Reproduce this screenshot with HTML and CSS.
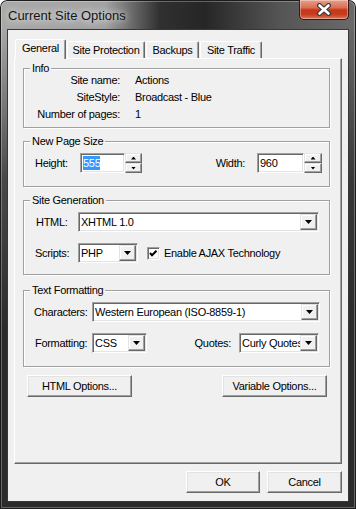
FILE: index.html
```html
<!DOCTYPE html>
<html>
<head>
<meta charset="utf-8">
<title>Current Site Options</title>
<link rel="stylesheet" href="styles.css">
</head>
<body>
<div class="window">
  <div class="titlebar">
    <span class="title">Current Site Options</span>
    <div class="close">
      <svg width="16" height="13" viewBox="0 0 16 13"><path d="M3.5 2.5 L12.5 10.5 M12.5 2.5 L3.5 10.5" stroke="#3c3c3c" stroke-width="5" stroke-linecap="round"/><path d="M3.5 2.5 L12.5 10.5 M12.5 2.5 L3.5 10.5" stroke="#fff" stroke-width="2.6" stroke-linecap="round"/></svg>
    </div>
  </div>
  <div class="client">
    <div class="tabs">
      <div class="tab active t-general">General</div>
      <div class="tab t-prot">Site Protection</div>
      <div class="tab t-back">Backups</div>
      <div class="tab t-traffic">Site Traffic</div>
    </div>
    <div class="panel">
      <div class="group info">
        <div class="group-title">Info</div>
        <div class="info-grid">
          <span class="k">Site name:</span><span>Actions</span>
          <span class="k">SiteStyle:</span><span>Broadcast - Blue</span>
          <span class="k">Number of pages:</span><span>1</span>
        </div>
      </div>

      <div class="group pagesize">
        <div class="group-title">New Page Size</div>
        <span class="lbl-height">Height:</span>
        <div class="field f-height"><span class="sel">555</span></div>
        <div class="spin"><span class="up"></span><span class="down"></span></div>
        <span class="lbl-width">Width:</span>
        <div class="field f-width">960</div>
        <div class="spin spin-w"><span class="up"></span><span class="down"></span></div>
      </div>

      <div class="group sitegen">
        <div class="group-title">Site Generation</div>
        <div class="row">
          <span class="lbl lbl-html">HTML:</span>
          <div class="select s-html"><span class="val">XHTML 1.0</span><span class="dd"></span></div>
        </div>
        <div class="row">
          <span class="lbl">Scripts:</span>
          <div class="select s-scripts"><span class="val">PHP</span><span class="dd"></span></div>
          <span class="check"><svg width="9" height="9" viewBox="0 0 9 9"><polyline points="1,4 3,6.2 7.5,1.7" fill="none" stroke="#000" stroke-width="2"/></svg></span>
          <span class="check-label">Enable AJAX Technology</span>
        </div>
      </div>

      <div class="group textfmt">
        <div class="group-title">Text Formatting</div>
        <div class="row">
          <span class="lbl2">Characters:</span>
          <div class="select s-chars"><span class="val">Western European (ISO-8859-1)</span><span class="dd"></span></div>
        </div>
        <div class="row">
          <span class="lbl2 lbl-fmt">Formatting:</span>
          <div class="select s-fmt"><span class="val">CSS</span><span class="dd"></span></div>
          <span class="lbl-quotes">Quotes:</span>
          <div class="select s-quotes"><span class="val">Curly Quotes</span><span class="dd"></span></div>
        </div>
      </div>

      <div class="option-buttons">
        <button class="btn wide">HTML Options...</button>
        <button class="btn wide">Variable Options...</button>
      </div>
    </div>
    <div class="dlg-buttons">
      <button class="btn ok">OK</button>
      <button class="btn cancel">Cancel</button>
    </div>
  </div>
</div>
</body>
</html>
```
FILE: styles.css
```css
* { box-sizing: border-box; }

body {
  margin: 0;
  font-family: "Liberation Sans", Arial, sans-serif;
  font-size: 11px;
  letter-spacing: -0.3px;
  color: #000;
  background: #fff;
}

.window {
  width: 356px;
  height: 509px;
  display: flex;
  flex-direction: column;
  border-radius: 7px 7px 0 0;
  background:
    linear-gradient(to bottom, rgba(40,40,40,0) 26px, rgba(40,40,40,0.75) 180px, #2b2b2b 330px),
    linear-gradient(to right, #a9a9a9 0, #a3a3a3 105px, #303030 160px, #262626 205px, #555 280px, #6a6a6a 356px);
  box-shadow: inset 0 0 0 1px #1c1c1c, inset 0 0 0 2px rgba(255,255,255,0.28);
  overflow: hidden;
}

.titlebar {
  height: 30px;
  flex: none;
  display: flex;
  align-items: flex-start;
  padding: 0 7px 0 8px;
}

.title {
  margin-top: 8px;
  font-size: 13px;
  line-height: 16px;
  letter-spacing: 0;
  color: #141414;
  text-shadow: 0 0 6px rgba(255,255,255,0.9), 0 0 12px rgba(255,255,255,0.6);
}

.close {
  margin-left: auto;
  width: 50px;
  height: 20px;
  border: 1px solid #3a1710;
  border-top: none;
  border-radius: 0 0 5px 5px;
  background: linear-gradient(#e6a08c 0, #da6f55 40%, #c8381a 52%, #c43c1c 75%, #de7556 100%);
  box-shadow: inset 0 0 0 1px rgba(255,255,255,0.35);
  display: flex;
  align-items: center;
  justify-content: center;
}

.client {
  flex: 1;
  margin: 0 8px 8px 8px;
  background: #f0f0f0;
  padding: 7px 6px 0;
  box-shadow: 0 0 0 1px #383838;
  display: flex;
  flex-direction: column;
}

.tabs {
  height: 21px;
  flex: none;
  display: flex;
  align-items: flex-end;
  padding-left: 1px;
}

.tab {
  height: 17px;
  margin-left: 1px;
  padding-top: 1px;
  border: 1px solid;
  border-bottom: none;
  border-color: #fff #696969 transparent #fff;
  box-shadow: inset -1px 0 0 #a0a0a0;
  border-radius: 2px 2px 0 0;
  text-align: center;
  line-height: 14px;
  background: #f0f0f0;
  white-space: nowrap;
}

.tab.active {
  height: 20px;
  margin-left: 0;
  margin-bottom: -1px;
  position: relative;
  z-index: 1;
}

.t-general { width: 51px; }
.t-prot { width: 78px; }
.t-back { width: 53px; }
.t-traffic { width: 62px; }

.panel {
  height: 406px;
  flex: none;
  border: 1px solid;
  border-color: #fff #696969 #696969 #fff;
  box-shadow: inset -1px -1px 0 #a0a0a0;
  padding: 9px 11px 0 8px;
  display: flex;
  flex-direction: column;
}

.group {
  position: relative;
  flex: none;
  border: 1px solid #a0a0a0;
  box-shadow: inset 1px 1px 0 #fff, 1px 1px 0 #fff;
}

.group-title {
  position: absolute;
  top: -7px;
  left: 6px;
  padding: 0 2px;
  background: #f0f0f0;
  line-height: 13px;
  white-space: nowrap;
}

/* Info */
.info {
  height: 60px;
  padding-top: 4px;
}

.info-grid {
  display: grid;
  grid-template-columns: 96px auto;
  column-gap: 15px;
  row-gap: 3px;
  line-height: 14px;
}

.k { text-align: right; }

/* New page size */
.pagesize {
  margin-top: 13px;
  height: 46px;
  display: flex;
  align-items: flex-start;
  padding: 11px 7px 0 11px;
}

.lbl-height { width: 45px; line-height: 20px; }
.lbl-width { margin-left: auto; margin-right: 12px; line-height: 20px; }

.field {
  height: 20px;
  border: 1px solid;
  border-color: #a0a0a0 #fff #fff #a0a0a0;
  box-shadow: inset 1px 1px 0 #696969, inset -1px -1px 0 #e3e3e3;
  background: #fff;
  padding: 2px 2px 0 2px;
  line-height: 14px;
  white-space: nowrap;
}

.f-height { width: 45px; }
.f-width { width: 47px; }

.sel {
  display: inline-block;
  background: #3399ff;
  color: #fff;
  line-height: 14px;
}

.spin {
  width: 17px;
  height: 20px;
  display: flex;
  flex-direction: column;
}

.spin-w { width: 18px; }

.spin span {
  flex: 1;
  display: flex;
  align-items: center;
  justify-content: center;
  background: #f0f0f0;
  border: 1px solid;
  border-color: #e3e3e3 #696969 #696969 #e3e3e3;
  box-shadow: inset -1px -1px 0 #a0a0a0, inset 1px 1px 0 #fff;
}

.spin span::after {
  content: "";
  width: 5px;
  height: 3px;
  background: #000;
}

.spin .up::after { clip-path: polygon(50% 0, 100% 100%, 0 100%); }
.spin .down::after { clip-path: polygon(0 0, 100% 0, 50% 100%); }

/* Selects */
.row {
  display: flex;
  align-items: center;
  height: 20px;
}

.row + .row { margin-top: 11px; }

.select {
  height: 20px;
  display: flex;
  border: 1px solid;
  border-color: #a0a0a0 #fff #fff #a0a0a0;
  box-shadow: inset 1px 1px 0 #696969, inset -1px -1px 0 #e3e3e3;
  background: #fff;
  padding: 1px;
}

.select .val {
  flex: 1;
  min-width: 0;
  overflow: hidden;
  white-space: nowrap;
  padding-left: 1px;
  line-height: 16px;
}

.dd {
  width: 17px;
  height: 16px;
  flex: none;
  display: flex;
  align-items: center;
  justify-content: center;
  background: #f0f0f0;
  border: 1px solid;
  border-color: #e3e3e3 #696969 #696969 #e3e3e3;
  box-shadow: inset -1px -1px 0 #a0a0a0, inset 1px 1px 0 #fff;
}

.dd::after {
  content: "";
  width: 7px;
  height: 4px;
  background: #000;
  clip-path: polygon(0 0, 100% 0, 50% 100%);
}

.sitegen {
  margin-top: 13px;
  height: 75px;
  padding: 11px 0 0 11px;
}

.lbl { width: 43px; }
.lbl-html { padding-left: 1px; }

.s-html { width: 241px; }
.s-scripts { width: 60px; }

.check {
  width: 13px;
  height: 13px;
  margin-left: 9px;
  border: 1px solid;
  border-color: #a0a0a0 #fff #fff #a0a0a0;
  box-shadow: inset 1px 1px 0 #696969, inset -1px -1px 0 #e3e3e3;
  background: #fff;
  display: flex;
  align-items: center;
  justify-content: center;
}

.check-label { margin-left: 4px; }

.textfmt {
  margin-top: 15px;
  height: 77px;
  padding: 11px 0 0 10px;
}

.lbl2 { width: 58px; }
.lbl-fmt { padding-left: 1px; }

.s-chars { width: 228px; }
.s-fmt { width: 55px; }
.lbl-quotes { margin-left: auto; }
.s-quotes { width: 80px; margin-left: 8px; margin-right: 10px; }

/* Buttons */
.btn {
  font: inherit;
  letter-spacing: inherit;
  color: #000;
  height: 22px;
  padding: 0;
  background: #f0f0f0;
  border: 1px solid;
  border-color: #fff #696969 #696969 #fff;
  box-shadow: inset -1px -1px 0 #a0a0a0, inset 1px 1px 0 #e3e3e3;
}

.option-buttons {
  margin-top: 8px;
  display: flex;
  justify-content: space-between;
  padding: 0 3px 0 4px;
}

.btn.wide { width: 105px; }

.dlg-buttons {
  margin-top: 7px;
  display: flex;
  justify-content: flex-end;
  gap: 7px;
}

.btn.ok { width: 74px; }
.btn.cancel { width: 75px; }
```
